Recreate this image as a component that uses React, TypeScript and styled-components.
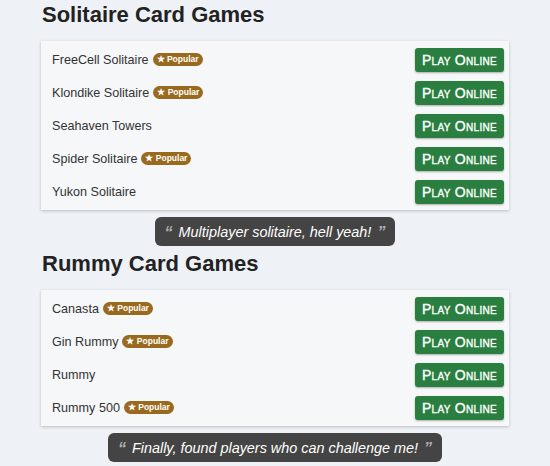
import React from 'react';
import styled, { createGlobalStyle } from 'styled-components';

const GlobalStyle = createGlobalStyle`
  html, body {
    margin: 0;
    padding: 0;
    background: #eef1f6;
    font-family: "Liberation Sans", Arial, sans-serif;
  }
`;

const Page = styled.div`
  width: 468px;
  margin: 0 auto;
  padding-top: 3px;
  display: flex;
  flex-direction: column;
`;

const Heading = styled.h2`
  margin: 0 0 0 1px;
  font-size: 22px;
  line-height: 24px;
  font-weight: 700;
  color: #222;
`;

const Card = styled.div`
  margin-top: 14px;
  background: #f6f7f9;
  box-shadow: 0 1px 3px rgba(0, 0, 0, 0.22);
  padding: 2px 5px 2px 11px;
  display: flex;
  flex-direction: column;
`;

const Row = styled.div`
  height: 33px;
  display: flex;
  align-items: center;
  justify-content: space-between;
`;

const Name = styled.span`
  display: flex;
  align-items: center;
  gap: 4px;
  font-size: 12.6px;
  color: #333;
`;

const Badge = styled.span`
  display: inline-flex;
  align-items: center;
  height: 13px;
  padding: 0 4px;
  border-radius: 7px;
  background: #996a1e;
  color: #fff;
  font-size: 8.5px;
  font-weight: 700;
  line-height: 13px;
`;

const PlayButton = styled.button`
  width: 89px;
  height: 24px;
  border: none;
  border-radius: 3px;
  background: #2a7f40;
  color: #fff;
  font-family: "Liberation Sans", Arial, sans-serif;
  font-size: 14px;
  font-weight: 400;
  font-variant: small-caps;
  letter-spacing: 0.3px;
  -webkit-text-stroke: 0.35px #fff;
  box-shadow: 0 1px 2px rgba(0, 0, 0, 0.3);
  padding: 0;
  cursor: pointer;
`;

const QuoteWrap = styled.div`
  display: flex;
  justify-content: center;
  margin: 7px 0 6px;
`;

const Quote = styled.div`
  background: #444;
  border-radius: 6px;
  height: 29px;
  padding: 0 10px;
  display: flex;
  align-items: center;
  gap: 6px;
  color: #fff;
  font-size: 14.4px;
  font-style: italic;
`;

const Mark = styled.span`
  color: #b0b0b0;
  font-weight: 700;
  font-size: 16px;
  line-height: 1;
  position: relative;
  top: 1px;
`;

type Game = { name: string; popular?: boolean };

const solitaire: Game[] = [
  { name: 'FreeCell Solitaire', popular: true },
  { name: 'Klondike Solitaire', popular: true },
  { name: 'Seahaven Towers' },
  { name: 'Spider Solitaire', popular: true },
  { name: 'Yukon Solitaire' },
];

const rummy: Game[] = [
  { name: 'Canasta', popular: true },
  { name: 'Gin Rummy', popular: true },
  { name: 'Rummy' },
  { name: 'Rummy 500', popular: true },
];

function Section({ title, games, quote }: { title: string; games: Game[]; quote: string }) {
  return (
    <>
      <Heading>{title}</Heading>
      <Card>
        {games.map((g) => (
          <Row key={g.name}>
            <Name>
              {g.name}
              {g.popular && <Badge>★ Popular</Badge>}
            </Name>
            <PlayButton>Play Online</PlayButton>
          </Row>
        ))}
      </Card>
      <QuoteWrap>
        <Quote>
          <Mark>“</Mark>
          {quote}
          <Mark>”</Mark>
        </Quote>
      </QuoteWrap>
    </>
  );
}

export default function App() {
  return (
    <>
      <GlobalStyle />
      <Page>
        <Section title="Solitaire Card Games" games={solitaire} quote="Multiplayer solitaire, hell yeah!" />
        <Section title="Rummy Card Games" games={rummy} quote="Finally, found players who can challenge me!" />
      </Page>
    </>
  );
}
